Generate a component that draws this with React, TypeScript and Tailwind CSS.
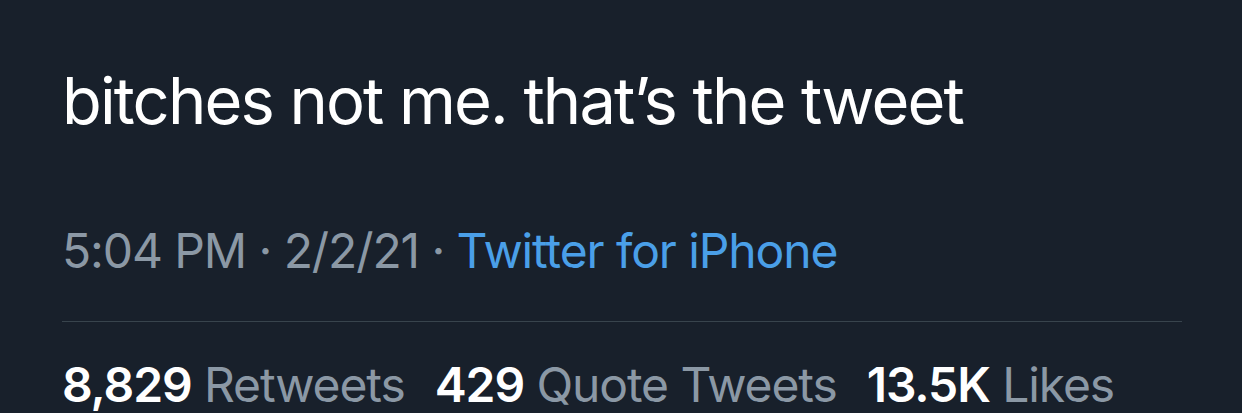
export default function App() {
  return (
    <div
      className="w-[1242px] h-[413px] overflow-hidden bg-[#18202b] pl-[62px] pr-[60px]"
      style={{ fontFamily: "Inter, 'Noto Sans', sans-serif" }}
    >
      <div className="pt-[61px] text-[65px] leading-[80px] text-white tracking-[-1.85px]">
        bitches not me. that’s the tweet
      </div>
      <div className="mt-[80px] text-[48px] leading-[60px] text-[#8b98a5] tracking-[-1.1px]">
        5:04 PM · 2/2/21 · <span className="text-[#4a9fe8]">Twitter for iPhone</span>
      </div>
      <div className="mt-[40px] border-t border-[#38444d]" />
      <div className="mt-[33px] text-[48px] leading-[60px] tracking-[-1.1px] flex gap-[30px]">
        <span>
          <span className="text-white font-semibold">8,829</span>{" "}
          <span className="text-[#8b98a5]">Retweets</span>
        </span>
        <span>
          <span className="text-white font-semibold">429</span>{" "}
          <span className="text-[#8b98a5]">Quote Tweets</span>
        </span>
        <span>
          <span className="text-white font-semibold">13.5K</span>{" "}
          <span className="text-[#8b98a5]">Likes</span>
        </span>
      </div>
    </div>
  );
}
